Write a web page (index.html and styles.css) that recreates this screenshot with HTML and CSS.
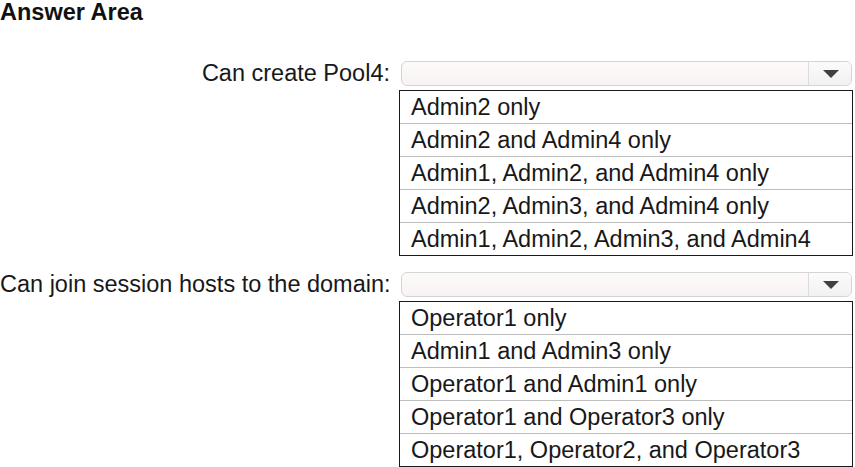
FILE: index.html
```html
<!DOCTYPE html>
<html lang="en">
<head>
<meta charset="utf-8">
<title>Answer Area</title>
<link rel="stylesheet" href="styles.css">
</head>
<body>
<div class="page">
  <h1 class="heading">Answer Area</h1>
  <div class="question first">
    <div class="label">Can create Pool4:</div>
    <div class="control">
      <div class="dropdown">
        <div class="dropdown-field"></div>
        <div class="dropdown-btn"><svg width="18" height="10" viewBox="0 0 18 10"><path d="M1 1h16l-8 8z" fill="#404040"/></svg></div>
      </div>
      <ul class="options">
        <li>Admin2 only</li>
        <li>Admin2 and Admin4 only</li>
        <li>Admin1, Admin2, and Admin4 only</li>
        <li>Admin2, Admin3, and Admin4 only</li>
        <li>Admin1, Admin2, Admin3, and Admin4</li>
      </ul>
    </div>
  </div>
  <div class="question second">
    <div class="label">Can join session hosts to the domain:</div>
    <div class="control">
      <div class="dropdown">
        <div class="dropdown-field"></div>
        <div class="dropdown-btn"><svg width="18" height="10" viewBox="0 0 18 10"><path d="M1 1h16l-8 8z" fill="#404040"/></svg></div>
      </div>
      <ul class="options">
        <li>Operator1 only</li>
        <li>Admin1 and Admin3 only</li>
        <li>Operator1 and Admin1 only</li>
        <li>Operator1 and Operator3 only</li>
        <li>Operator1, Operator2, and Operator3</li>
      </ul>
    </div>
  </div>
</div>
</body>
</html>
```

FILE: styles.css
```css
html, body {
  margin: 0;
  padding: 0;
  background: #ffffff;
}

body {
  font-family: "Liberation Sans", Arial, sans-serif;
  font-size: 23.5px;
  color: #181818;
  overflow: hidden;
}

.page {
  width: 855px;
  height: 467px;
}

.heading {
  margin: 0;
  padding-left: 0;
  font-size: 23.5px;
  font-weight: bold;
  line-height: 24px;
  height: 24px;
  color: #111111;
}

.question {
  display: flex;
  column-gap: 9px;
}

.question.first {
  margin-top: 37px;
}

.question.second {
  margin-top: 16px;
}

.label {
  width: 390px;
  flex: none;
  text-align: right;
  line-height: 25px;
  height: 25px;
  white-space: nowrap;
}

.control {
  width: 454px;
  flex: none;
  display: flex;
  flex-direction: column;
  row-gap: 4px;
}

.dropdown {
  margin: 0 1px 0 2px;
  height: 25px;
  box-sizing: border-box;
  border: 1px solid #d4d4d4;
  border-radius: 6px;
  display: flex;
  background: linear-gradient(#fdfafa, #f8f3f3);
  overflow: hidden;
}

.dropdown-field {
  flex: 1;
}

.dropdown-btn {
  width: 42px;
  border-left: 1px solid #dcdcdc;
  display: flex;
  align-items: center;
  justify-content: center;
  background: linear-gradient(#fbfbfb, #f1f1f1);
}

.dropdown-btn svg {
  display: block;
  margin-left: 1px;
}

.options {
  list-style: none;
  margin: 0;
  padding: 0;
  border: 1px solid #1a1a1a;
}

.options li {
  height: 32px;
  line-height: 32px;
  padding-left: 11px;
  white-space: nowrap;
  border-top: 1px solid #bdbdbd;
}

.options li:first-child {
  border-top: none;
}
```
